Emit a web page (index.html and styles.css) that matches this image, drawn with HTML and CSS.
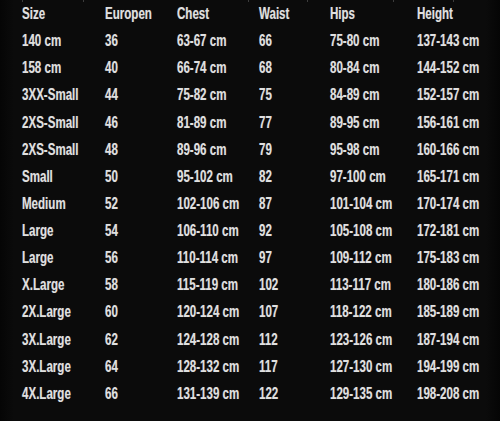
FILE: index.html
```html
<!DOCTYPE html>
<html>
<head>
<meta charset="utf-8">
<link rel="stylesheet" href="styles.css">
</head>
<body>
<div class="frame">
  <div class="ticks">
    <span class="tick t1"></span><span class="tick t2"></span><span class="tick t3"></span>
    <span class="tick t4"></span><span class="tick t5"></span><span class="tick t6"></span>
  </div>
  <div class="chart">
    <div class="row head"><span>Size</span><span>Europen</span><span>Chest</span><span>Waist</span><span>Hips</span><span>Height</span></div>
    <div class="row"><span>140 cm</span><span>36</span><span>63-67 cm</span><span>66</span><span>75-80 cm</span><span>137-143 cm</span></div>
    <div class="row"><span>158 cm</span><span>40</span><span>66-74 cm</span><span>68</span><span>80-84 cm</span><span>144-152 cm</span></div>
    <div class="row"><span>3XX-Small</span><span>44</span><span>75-82 cm</span><span>75</span><span>84-89 cm</span><span>152-157 cm</span></div>
    <div class="row"><span>2XS-Small</span><span>46</span><span>81-89 cm</span><span>77</span><span>89-95 cm</span><span>156-161 cm</span></div>
    <div class="row"><span>2XS-Small</span><span>48</span><span>89-96 cm</span><span>79</span><span>95-98 cm</span><span>160-166 cm</span></div>
    <div class="row"><span>Small</span><span>50</span><span>95-102 cm</span><span>82</span><span>97-100 cm</span><span>165-171 cm</span></div>
    <div class="row"><span>Medium</span><span>52</span><span>102-106 cm</span><span>87</span><span>101-104 cm</span><span>170-174 cm</span></div>
    <div class="row"><span>Large</span><span>54</span><span>106-110 cm</span><span>92</span><span>105-108 cm</span><span>172-181 cm</span></div>
    <div class="row"><span>Large</span><span>56</span><span>110-114 cm</span><span>97</span><span>109-112 cm</span><span>175-183 cm</span></div>
    <div class="row"><span>X.Large</span><span>58</span><span>115-119 cm</span><span>102</span><span>113-117 cm</span><span>180-186 cm</span></div>
    <div class="row"><span>2X.Large</span><span>60</span><span>120-124 cm</span><span>107</span><span>118-122 cm</span><span>185-189 cm</span></div>
    <div class="row"><span>3X.Large</span><span>62</span><span>124-128 cm</span><span>112</span><span>123-126 cm</span><span>187-194 cm</span></div>
    <div class="row"><span>3X.Large</span><span>64</span><span>128-132 cm</span><span>117</span><span>127-130 cm</span><span>194-199 cm</span></div>
    <div class="row"><span>4X.Large</span><span>66</span><span>131-139 cm</span><span>122</span><span>129-135 cm</span><span>198-208 cm</span></div>
  </div>
</div>
</body>
</html>
```
FILE: styles.css
```css
html, body {
  margin: 0;
  padding: 0;
  background: #070707;
}
.frame {
  position: relative;
  width: 500px;
  height: 421px;
  background: linear-gradient(to right, #050505 0, #0b0b0b 14px, #0b0b0b 486px, #050505 500px);
  overflow: hidden;
}
.ticks {
  position: absolute;
  top: 0;
  left: 0;
  width: 500px;
  height: 3px;
}
.tick {
  position: absolute;
  top: 0;
  width: 1px;
  height: 2px;
  background: #3c3c3c;
}
.t1 { left: 22px; }
.t2 { left: 83px; }
.t3 { left: 248px; }
.t4 { left: 307px; }
.t5 { left: 393px; }
.t6 { left: 453px; }
.chart {
  width: 735px;
  transform: scaleX(0.68);
  transform-origin: 0 0;
  padding: 0.5px 0 0 32.35px;
  box-sizing: border-box;
  font-family: "Liberation Sans", Arial, sans-serif;
  font-weight: bold;
  font-size: 17px;
  color: #e0e0e0;
  text-shadow: 0 0 1px rgba(255, 255, 255, 0.3);
}
.row {
  display: grid;
  grid-template-columns: 122.06px 105.88px 120.59px 104.41px 127.94px 1fr;
  height: 27.14px;
  align-items: center;
  white-space: nowrap;
}
```
